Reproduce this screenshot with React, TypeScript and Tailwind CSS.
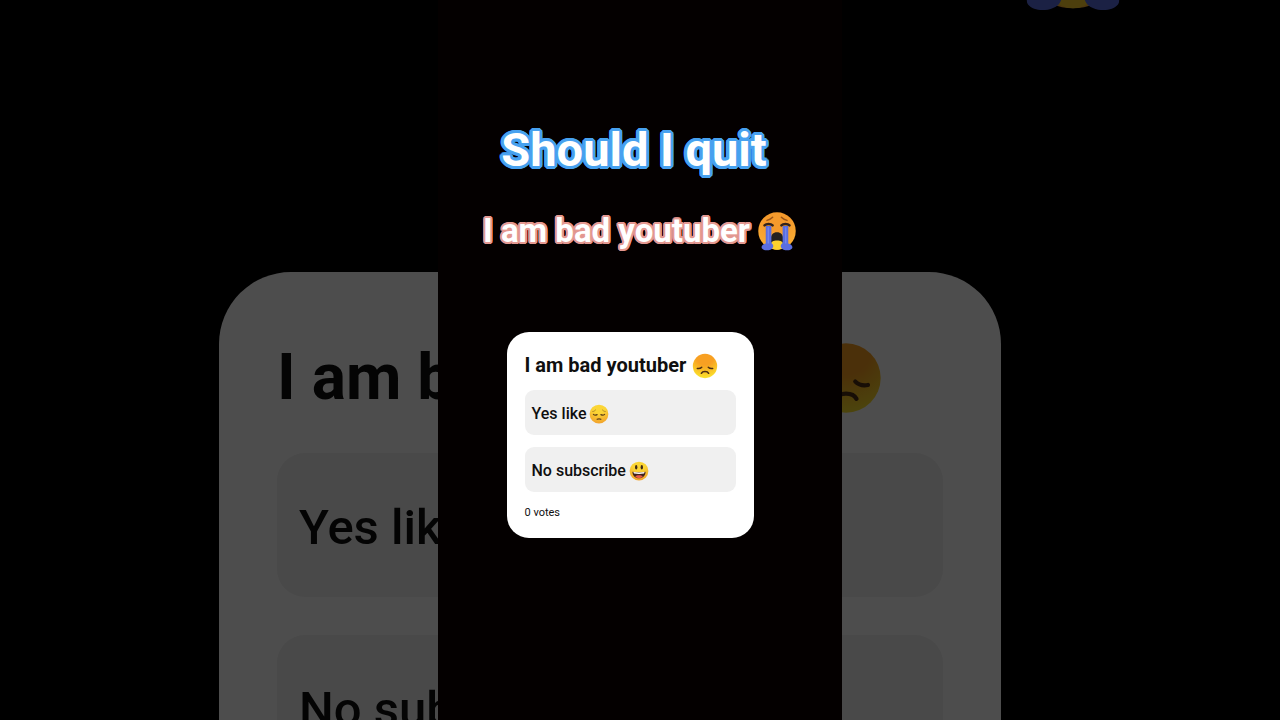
import { useId } from "react";
import type { ReactNode } from "react";
import clsx from "clsx";

interface EmojiProps {
  label: string;
  className: string;
}

interface FaceProps extends EmojiProps {
  from: string;
  to: string;
  children: ReactNode;
}

function Face({ label, className, from, to, children }: FaceProps) {
  const id = useId();
  return (
    <svg viewBox="0 0 64 64" role="img" aria-label={label} className={clsx("shrink-0", className)}>
      <defs>
        <radialGradient id={id} cx="0.5" cy="0.1" r="0.9">
          <stop offset="0.4" stopColor={from} />
          <stop offset="1" stopColor={to} />
        </radialGradient>
      </defs>
      <circle cx="32" cy="32" r="30" fill={`url(#${id})`} />
      {children}
    </svg>
  );
}

function CryingFace(props: EmojiProps) {
  return (
    <Face {...props} from="#f59a2c" to="#fbb034">
      <g fill="none" stroke="#9a5518" strokeWidth="2.4" strokeLinecap="round">
        <path d="M16 15c4-1 6-2 9-5" />
        <path d="M48 15c-4-1-6-2-9-5" />
      </g>
      <g fill="none" stroke="#33231c" strokeWidth="4" strokeLinecap="round">
        <path d="M12 23c3-3 10-3 13 0" />
        <path d="M39 23c3-3 10-3 13 0" />
      </g>
      <path d="M22 46c0-9 4-12 10-12s10 3 10 12v6H22z" fill="#24211f" />
      <path d="M22 54c0-5 4-7 10-7s10 2 10 7c0 5-4 8-10 8s-10-3-10-8z" fill="#fdd22d" />
      <path d="M14 24h9v27c3 2 4 5 2 8-2 4-13 6-17 1-2-3 1-7 6-8z" fill="#5a6ee0" />
      <path d="M50 24h-9v27c-3 2-4 5-2 8 2 4 13 6 17 1 2-3-1-7-6-8z" fill="#5a6ee0" />
      <g fill="none" stroke="#7589f0" strokeWidth="2">
        <path d="M18 26v26" />
        <path d="M46 26v26" />
      </g>
    </Face>
  );
}

function DisappointedFace(props: EmojiProps) {
  return (
    <Face {...props} from="#f8a022" to="#fbe42c">
      <g fill="none" stroke="#4c2e14" strokeLinecap="round">
        <path d="M13 38c5 1 8 0 11-3" strokeWidth="3.6" />
        <path d="M51 38c-5 1-8 0-11-3" strokeWidth="3.6" />
        <path d="M23 50c3-6 15-6 18 0" strokeWidth="3.8" />
      </g>
    </Face>
  );
}

function PensiveFace(props: EmojiProps) {
  return (
    <Face {...props} from="#fbd535" to="#f2a32c">
      <g fill="none" stroke="#8a6420" strokeLinecap="round">
        <path d="M12 24c4 0 6-2 9-5" strokeWidth="2" />
        <path d="M52 24c-4 0-6-2-9-5" strokeWidth="2" />
      </g>
      <g fill="none" stroke="#5d4018" strokeLinecap="round">
        <path d="M14 33c3 3 8 3 12 1" strokeWidth="3.6" />
        <path d="M50 33c-3 3-8 3-12 1" strokeWidth="3.6" />
        <path d="M26 49c4-2 8-2 12 0" strokeWidth="3.6" />
      </g>
    </Face>
  );
}

function SmileyFace(props: EmojiProps) {
  return (
    <Face {...props} from="#fbd535" to="#f2a32c">
      <ellipse cx="23" cy="20" rx="3.8" ry="7.5" fill="#3f2a17" />
      <ellipse cx="41" cy="20" rx="3.8" ry="7.5" fill="#3f2a17" />
      <path d="M11 34c12 3 30 3 42 0 0 13-9 21-21 21s-21-8-21-21z" fill="#43231b" />
      <path d="M14 35c11 2 25 2 36 0l-2 5c-10 2-22 2-32 0z" fill="#ffffff" />
      <path d="M20 50c4-6 20-6 24 0-7 6-17 6-24 0z" fill="#e9584a" />
    </Face>
  );
}

const options = [
  { text: "Yes like", emoji: "pensive face", Icon: PensiveFace },
  { text: "No subscribe", emoji: "smiling face", Icon: SmileyFace },
];

function PollCard({ large = false }: { large?: boolean }) {
  return (
    <section
      className={clsx(
        "bg-white text-[#0f0f0f]",
        large ? "w-[782px] rounded-[72px] px-[58px] pt-[66px] pb-14" : "w-[247px] rounded-[22px] px-[18px] pt-5 pb-[17px]"
      )}
    >
      <h2
        className={clsx(
          "flex items-center font-bold whitespace-nowrap",
          large ? "mb-[35px] gap-3.5 text-[64px] leading-[80px]" : "mb-[11px] gap-1.5 text-[20px] leading-[27px]"
        )}
      >
        I am bad youtuber
        <DisappointedFace label="disappointed face" className={large ? "size-[74px]" : "size-[26px]"} />
      </h2>
      <div className={clsx("flex flex-col", large ? "gap-[38px]" : "gap-3")}>
        {options.map(({ text, emoji, Icon }) => (
          <button
            key={text}
            type="button"
            className={clsx(
              "flex items-center bg-[#f0f0f0] text-left font-medium whitespace-nowrap",
              large ? "h-36 gap-3 rounded-[28px] px-[22px] pt-1.5 text-[49px]" : "h-[45px] gap-[3px] rounded-[9px] px-[7px] pt-0.5 text-[16px]"
            )}
          >
            {text}
            <Icon label={emoji} className={large ? "size-16" : "size-5"} />
          </button>
        ))}
      </div>
      <p className={large ? "mt-9 text-[35px] leading-[50px]" : "mt-3 text-[11px] leading-[17px]"}>0 votes</p>
    </section>
  );
}

export default function App() {
  return (
    <main className="relative h-screen overflow-hidden bg-black font-[Roboto,sans-serif]">
      {/* Enlarged, dimmed copy of the story behind the column */}
      <div aria-hidden="true" inert className="absolute inset-0 overflow-hidden opacity-30">
        <div className="-mt-[108px] flex justify-center pl-[866px]">
          <CryingFace label="crying face" className="size-[120px]" />
        </div>
        <div className="mt-[260px] flex justify-center pr-[60px]">
          <div className="shrink-0">
            <PollCard large />
          </div>
        </div>
      </div>

      <div className="relative mx-auto flex h-full w-[404px] flex-col items-center bg-[#040000] pt-[120px]">
        {/* Rings of hard shadows give the letters a round outline */}
        <h1 className="pr-3 text-[47px] leading-[60px] font-bold whitespace-nowrap text-white [text-shadow:3px_0_#47a1ef,-3px_0_#47a1ef,0_3px_#47a1ef,0_-3px_#47a1ef,3px_1px_#47a1ef,3px_-1px_#47a1ef,-3px_1px_#47a1ef,-3px_-1px_#47a1ef,1px_3px_#47a1ef,-1px_3px_#47a1ef,1px_-3px_#47a1ef,-1px_-3px_#47a1ef,2px_2px_#47a1ef,-2px_2px_#47a1ef,2px_-2px_#47a1ef,-2px_-2px_#47a1ef]">
          Should I quit
        </h1>
        <p className="mt-5 flex items-center gap-[7px] text-[33px] leading-[62px] font-bold whitespace-nowrap text-white [text-shadow:2px_0_#e39891,-2px_0_#e39891,0_2px_#e39891,0_-2px_#e39891,2px_1px_#e39891,2px_-1px_#e39891,-2px_1px_#e39891,-2px_-1px_#e39891,1px_2px_#e39891,-1px_2px_#e39891,1px_-2px_#e39891,-1px_-2px_#e39891]">
          I am bad youtuber
          <CryingFace label="crying face" className="size-10" />
        </p>
        <div className="mt-[70px] pr-5">
          <PollCard />
        </div>
      </div>
    </main>
  );
}
